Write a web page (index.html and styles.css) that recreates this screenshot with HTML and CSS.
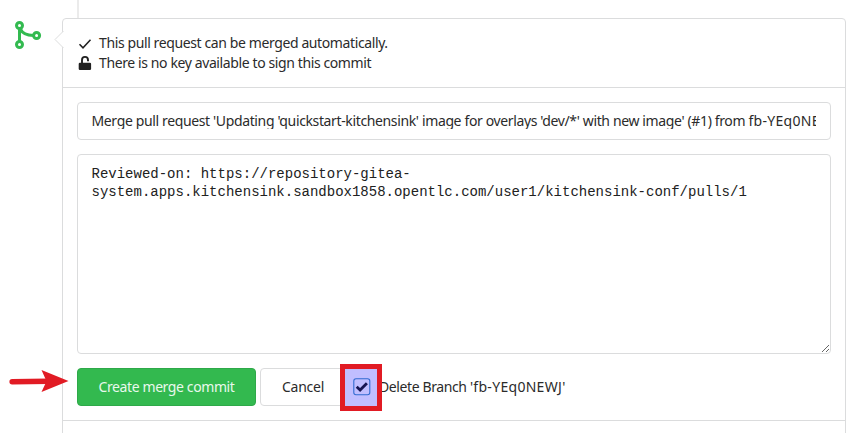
FILE: index.html
```html
<!DOCTYPE html>
<html lang="en">
<head>
<meta charset="utf-8">
<title>Merge pull request</title>
<link rel="stylesheet" href="styles.css">
</head>
<body>
<main class="timeline">
  <div class="avatar">
    <svg class="branch" width="28" height="30" viewBox="0 0 28 30" fill="none" stroke="#33ba50" stroke-width="3">
      <circle cx="5.5" cy="5.5" r="3"/><circle cx="5.5" cy="24.5" r="3"/><circle cx="22.6" cy="15.5" r="3"/>
      <path d="M5.5 8.5v13M6.2 8.7C8.2 13.3 12 15.5 19.5 15.5"/>
    </svg>
    <svg class="arrow" width="60" height="24" viewBox="0 0 60 24">
      <path d="M3.2 12.8L39 12.3" stroke="#e11b24" stroke-width="5.6" stroke-linecap="round"/>
      <path d="M32.5 1L59.5 11.9L32.5 23L37.5 12.3Z" fill="#e11b24"/>
    </svg>
  </div>
  <section class="panel">
    <svg class="pointer" width="10" height="18" viewBox="0 0 10 18"><path d="M9.5 0L1 8.5L9.5 17" fill="#fff" stroke="#dcdddd"/></svg>
    <div class="status">
      <div class="row">
        <svg width="14" height="20" viewBox="0 0 14 20"><path d="M1.5 11.2L5 14.8L12.5 6.7" fill="none" stroke="#212121" stroke-width="1.5"/></svg>
        <span>This pull request can be merged automatically.</span>
      </div>
      <div class="row">
        <svg width="14" height="20" viewBox="0 0 14 20"><rect x=".7" y="9.8" width="12.4" height="7.2" rx="1.2" fill="#212121"/><path d="M4 10.4V6.9a3 3 0 0 1 6 0V8.2" fill="none" stroke="#212121" stroke-width="1.9"/></svg>
        <span>There is no key available to sign this commit</span>
      </div>
    </div>
    <form class="form">
      <div class="field title"><div class="title-text">Merge pull request 'Updating 'quickstart-kitchensink' image for overlays 'dev/*' with new image' (#1) from <span class="branch-name">fb-YEq0NEWJ</span></div></div>
      <textarea class="field message" spellcheck="false">Reviewed-on: https://repository-gitea-system.apps.kitchensink.sandbox1858.opentlc.com/user1/kitchensink-conf/pulls/1</textarea>
      <div class="actions">
        <button type="button" class="button primary">Create merge commit</button>
        <button type="button" class="button cancel">Cancel</button>
        <label class="delete">Delete Branch <span class="branch-name">'fb-YEq0NEWJ'</span></label>
        <span class="highlight">
          <svg width="18" height="18" viewBox="0 0 18 18"><rect x=".8" y=".8" width="16" height="16" rx="2.2" fill="none" stroke="#326bd1" stroke-width="1.1"/><path d="M3.7 8.8L7.1 12L13.9 5.2" fill="none" stroke="#171552" stroke-width="2.8"/></svg>
        </span>
      </div>
    </form>
  </section>
</main>
</body>
</html>
```
FILE: styles.css
```css
* { box-sizing: border-box; }
body {
  margin: 0;
  height: 433px;
  overflow: hidden;
  background: #fff;
  color: #2b2b2b;
  font: 14px/20px "Noto Sans", sans-serif;
  letter-spacing: -.39px;
}
.timeline {
  position: relative;
  display: flex;
  height: 433px;
  padding-top: 18px;
}
.timeline::before {
  content: "";
  position: absolute;
  left: 77px;
  top: 0;
  width: 2px;
  height: 18px;
  background: #ebebeb;
}
.avatar {
  width: 62px;
  flex: none;
  display: flex;
  flex-direction: column;
}
.branch { margin: 2px 0 0 14px; }
.arrow { margin: 319px 0 0 9px; flex: none; z-index: 1; }
.panel {
  position: relative;
  width: 784px;
  height: 430px;
  border: 1px solid #dbdcdd;
  border-radius: 4px;
}
.pointer { position: absolute; left: -9px; top: 12px; }
.status {
  height: 69px;
  padding: 14px 15px 0;
  border-bottom: 1px solid #dbdcdd;
}
.row { display: flex; gap: 7px; height: 20px; white-space: nowrap; }
.form {
  height: 333px;
  padding: 14px;
  border-bottom: 1px solid #dbdcdd;
}
.field {
  display: block;
  width: 754px;
  border: 1px solid #dbdcdd;
  border-radius: 4px;
  background: #fff;
}
.title { height: 38px; padding: 9px 14px 0 13.5px; }
.title-text { height: 17px; line-height: 18px; overflow: hidden; white-space: nowrap; letter-spacing: -.365px; }
.branch-name { letter-spacing: .3px; }
.message {
  height: 200px;
  margin-top: 14px;
  padding: 10px 13px 10px 13.5px;
  color: #212121;
  font: 14px/18px "Liberation Mono", monospace;
  letter-spacing: 0;
  outline: none;
  resize: vertical;
}
.actions {
  position: relative;
  display: flex;
  align-items: center;
  height: 38px;
  margin-top: 14px;
}
.button {
  height: 38px;
  padding: 0;
  border: 1px solid #dbdcdd;
  border-radius: 4px;
  background: #fff;
  color: #2b2b2b;
  font: inherit;
  letter-spacing: -.4px;
  white-space: nowrap;
}
.primary { width: 179px; background: #33b94f; border-color: #2ea949; color: #e9f8ec; }
.cancel { width: 86px; margin-left: 4px; letter-spacing: -.25px; }
.delete { margin-left: 33px; white-space: nowrap; }
.highlight {
  position: absolute;
  left: 263px;
  top: -4px;
  width: 42px;
  height: 47px;
  padding: 0 0 2px 1px;
  display: grid;
  place-items: center;
  border: 5px solid #e11b24;
  background: #c1beff;
}
```
